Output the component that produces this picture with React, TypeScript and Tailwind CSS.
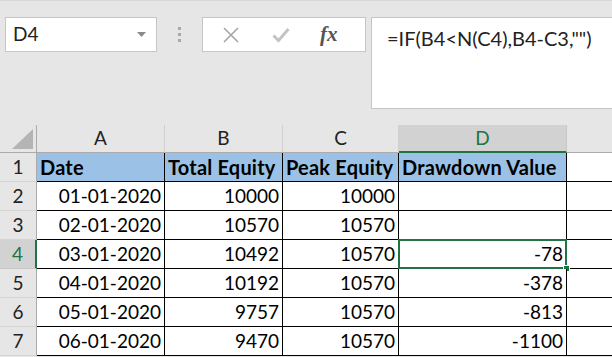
const cols = ["A", "B", "C", "D"];

const rows: [string, string, string, string][] = [
  ["01-01-2020", "10000", "10000", ""],
  ["02-01-2020", "10570", "10570", ""],
  ["03-01-2020", "10492", "10570", "-78"],
  ["04-01-2020", "10192", "10570", "-378"],
  ["05-01-2020", "9757", "10570", "-813"],
  ["06-01-2020", "9470", "10570", "-1100"],
];

const gridCols = "grid grid-cols-[37px_128px_118px_116px_168px_1fr]";

function FormulaBar() {
  return (
    <div className="flex h-[125px] items-start border-t border-[#d6d6d6] bg-[#e6e6e6] pt-[16px]">
      <div className="ml-[5px] flex h-[35px] w-[152px] items-center justify-between border border-[#c6c6c6] bg-white pl-[7px] pr-[10px]">
        <span className="text-[19px] text-[#222]">D4</span>
        <svg width="9" height="5" viewBox="0 0 9 5">
          <path d="M0 0h9L4.5 5z" fill="#8a8a8a" />
        </svg>
      </div>
      <div className="flex w-[45px] flex-col items-center gap-[3px] pt-[10px]">
        <span className="h-[3px] w-[3px] bg-[#a8a8a8]" />
        <span className="h-[3px] w-[3px] bg-[#a8a8a8]" />
        <span className="h-[3px] w-[3px] bg-[#a8a8a8]" />
      </div>
      <div className="flex h-[35px] w-[164px] items-center border border-[#c6c6c6] bg-white">
        <svg className="ml-[19px]" width="18" height="18" viewBox="0 0 18 18">
          <path d="M2 2l14 14M16 2L2 16" stroke="#a6a6a6" strokeWidth="1.6" fill="none" />
        </svg>
        <svg className="ml-[32px]" width="18" height="16" viewBox="0 0 18 16">
          <path d="M1.5 8.5l5 5L16.5 2" stroke="#c4c4c4" strokeWidth="3" fill="none" />
        </svg>
        <span className="ml-[30px] font-['Liberation_Serif',serif] text-[21px] font-bold italic text-[#555]">fx</span>
      </div>
      <div className="ml-[5px] h-[92px] flex-1 border border-r-0 border-[#c6c6c6] bg-white pl-[15px] pt-[5px]">
        <span className="text-[20px] text-[#222]">=IF(B4&lt;N(C4),B4-C3,"")</span>
      </div>
    </div>
  );
}

function Corner() {
  return (
    <div className="relative h-[28px] border-r border-b border-[#ababab] bg-[#e6e6e6]">
      <svg className="absolute right-[3px] bottom-[3px]" width="21" height="20" viewBox="0 0 21 20">
        <path d="M21 0V20H0z" fill="#b4b4b4" />
      </svg>
    </div>
  );
}

export default function App() {
  return (
    <div className="h-[357px] w-[612px] overflow-hidden bg-[#e6e6e6] font-['Lato',sans-serif]">
      <FormulaBar />
      <div className={gridCols}>
        <Corner />
        {cols.map((c) =>
          c === "D" ? (
            <div
              key={c}
              className="flex h-[28px] items-center justify-center border-r border-b-2 border-r-[#c8c8c8] border-b-[#217346] bg-[#d2d2d2] text-[19px] text-[#217346]"
            >
              {c}
            </div>
          ) : (
            <div
              key={c}
              className="flex h-[28px] items-center justify-center border-r border-b border-r-[#d0d0d0] border-b-[#ababab] text-[19px] text-[#222]"
            >
              {c}
            </div>
          )
        )}
        <div className="h-[28px] border-b border-[#ababab]" />

        <div className="flex h-[29px] items-center justify-center border-r border-b border-r-[#ababab] border-b-[#d4d4d4] text-[19px] text-[#222]">
          1
        </div>
        {["Date", "Total Equity", "Peak Equity", "Drawdown Value"].map((h) => (
          <div
            key={h}
            className="flex h-[29px] items-center overflow-hidden whitespace-nowrap border-r border-b border-black bg-[#9bc2e6] pl-[3px] text-[20px] font-bold tracking-[0.2px] text-black"
          >
            {h}
          </div>
        ))}
        <div className="h-[29px] border-b border-black bg-white" />

        {rows.map((r, i) => {
          const n = i + 2;
          const sel = n === 4;
          return [
            <div
              key={`h${n}`}
              className={
                sel
                  ? "flex h-[29px] items-center justify-center border-r-2 border-b border-r-[#217346] border-b-[#c8c8c8] bg-[#d2d2d2] text-[19px] text-[#217346]"
                  : "flex h-[29px] items-center justify-center border-r border-b border-r-[#ababab] border-b-[#d4d4d4] text-[19px] text-[#222]"
              }
            >
              {n}
            </div>,
            ...r.map((v, j) => (
              <div
                key={`${n}-${j}`}
                className="relative flex h-[29px] items-center justify-end border-r border-b border-black bg-white pr-[3px] text-[19px] text-black"
              >
                {v}
                {sel && j === 3 && (
                  <>
                    <div className="absolute -top-[1px] -left-[1px] -right-[1px] -bottom-[1px] border-2 border-[#217346]" />
                    <div className="absolute -right-[4px] -bottom-[4px] h-[7px] w-[7px] border border-white bg-[#217346]" />
                  </>
                )}
              </div>
            )),
            <div key={`e${n}`} className="h-[29px] border-b border-black bg-white" />,
          ];
        })}
      </div>
    </div>
  );
}
